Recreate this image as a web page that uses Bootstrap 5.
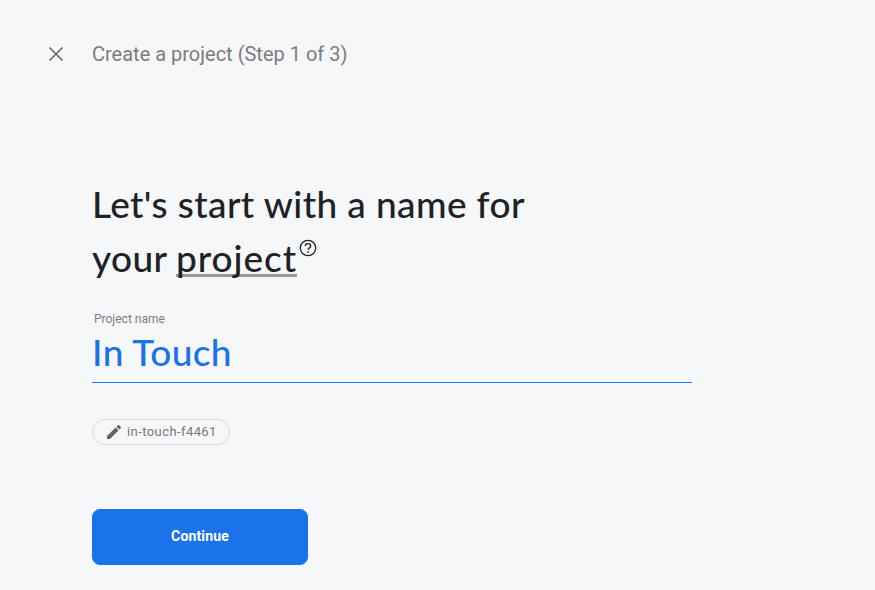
<!DOCTYPE html>
<html lang="en">
<head>
<meta charset="utf-8">
<meta name="viewport" content="width=device-width, initial-scale=1">
<title>Create a project</title>
<link href="https://cdn.jsdelivr.net/npm/bootstrap@5.3.0/dist/css/bootstrap.min.css" rel="stylesheet">
<style>
body{background:#f6f7f9;font-family:Roboto,sans-serif;color:#202124;height:590px;overflow:hidden}
.topbar{height:60px;margin-top:24px;padding-left:48px}
.close-btn{width:16px;height:60px;margin-right:28px;color:#6b6c6e}
.step-title{font-size:20px;line-height:24px;font-weight:400;color:#7b7c7e}
.setup{padding-left:92px;padding-top:93px}
.headline{font-family:Lato,sans-serif;font-size:37px;line-height:54px;font-weight:500;letter-spacing:.4px;color:#202124}
.term{border-bottom:3px solid #98999b;height:38px;line-height:38px;display:inline-block;letter-spacing:.95px;margin-left:-.5px}
.help-icon{vertical-align:15px;margin-left:2px}
.field-label{font-size:12px;line-height:16px;color:#7b7c7e;padding-left:2px;margin-top:26px}
.name-input{width:600px;height:56px;border:0;border-bottom:1px solid #1a73e8;border-radius:0;color:#1a73e8!important;font-family:Lato,sans-serif;font-size:37px;font-weight:500;letter-spacing:.4px}
.name-input.form-control{padding:0 0 6px}
.id-chip{width:138px;height:26px;margin-top:36px;padding-left:14px;border:1px solid #d7d9dc;color:#77787a;font-size:13px;letter-spacing:.42px}
.id-text{margin-left:6px}
.continue-btn{--bs-btn-bg:#1a73e8;--bs-btn-border-color:#1a73e8;width:216px;height:56px;margin-top:64px;border-radius:8px;font-size:14px;font-weight:700;letter-spacing:.15px}
.continue-btn.btn{padding:0 0 2px}
</style>
<script src="https://cdn.jsdelivr.net/npm/bootstrap@5.3.0/dist/js/bootstrap.bundle.min.js"></script>
</head>
<body class="d-flex flex-column">
<header class="topbar d-flex align-items-center flex-shrink-0">
<button class="close-btn btn p-0 border-0 d-flex align-items-center" type="button" aria-label="Close"><svg width="16" height="16" viewBox="0 0 16 16" fill="none" stroke="currentColor" stroke-width="1.7"><path d="M1.5 1.5l13 13M14.5 1.5l-13 13"/></svg></button>
<span class="step-title">Create a project (Step 1 of 3)</span>
</header>
<main class="setup d-flex flex-column align-items-start">
<h1 class="headline mb-0">Let's start with a name for<br>your <span class="term">project</span><svg class="help-icon" width="18" height="18" viewBox="0 0 18 18" fill="none" stroke="#202124"><circle cx="9" cy="9" r="7.7" stroke-width="1.3"/><path d="M6.3 7.1a2.7 2.5 0 1 1 5.4 0c0 1.7-2.6 1.9-2.6 3.7" stroke-width="1.4"/><path d="M9.1 12.2v1.5" stroke-width="1.5"/></svg></h1>
<label class="field-label" for="pname">Project name</label>
<input class="name-input form-control shadow-none bg-transparent" id="pname" type="text" value="In Touch">
<div class="id-chip d-flex align-items-center rounded-pill"><svg width="14" height="14" viewBox="0 0 18 18" fill="#616264"><path d="M0 14.25V18h3.75L14.81 6.94l-3.75-3.75zM17.71 4.04a1 1 0 0 0 0-1.41L15.37.29a1 1 0 0 0-1.41 0l-1.83 1.83 3.75 3.75z"/></svg><span class="id-text text-nowrap">in-touch-f4461</span></div>
<button class="continue-btn btn btn-primary" type="button">Continue</button>
</main>
</body>
</html>
